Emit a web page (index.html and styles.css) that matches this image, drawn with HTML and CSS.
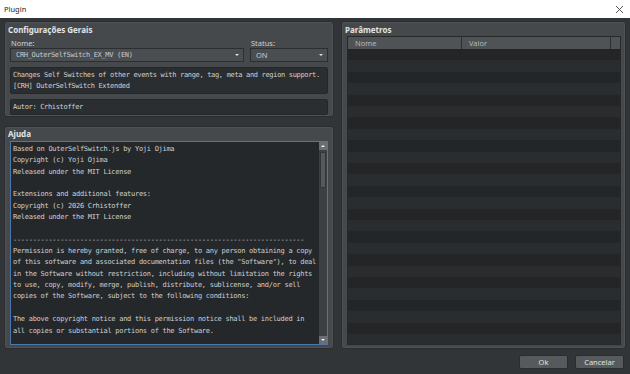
FILE: index.html
```html
<!DOCTYPE html>
<html lang="pt">
<head>
    <meta charset="UTF-8">
    <title>Plugin</title>
    <link rel="stylesheet" href="styles.css">
</head>
<body>
    <div class="titlebar">
        <span class="title">Plugin</span>
        <svg class="close" width="9" height="9" viewBox="0 0 9 9">
            <path d="M1 1 L8 8 M8 1 L1 8" stroke="#444" stroke-width="0.9" fill="none"/>
        </svg>
    </div>

    <div class="main">
        <div class="left">
            <section class="panel general">
                <div class="panel-title">Configurações Gerais</div>
                <div class="fields">
                    <div class="field name">
                        <div class="label">Nome:</div>
                        <div class="select mono">CRH_OuterSelfSwitch_EX_MV (EN)<span class="arrow"></span></div>
                    </div>
                    <div class="field status">
                        <div class="label">Status:</div>
                        <div class="select">ON<span class="arrow"></span></div>
                    </div>
                </div>
                <div class="box desc mono">Changes Self Switches of other events with range, tag, meta and region support.<br>[CRH] OuterSelfSwitch Extended</div>
                <div class="box author mono">Autor: Crhistoffer</div>
            </section>

            <section class="panel help">
                <div class="panel-title">Ajuda</div>
                <div class="textarea">
<pre class="help-text">Based on OuterSelfSwitch.js by Yoji Ojima
Copyright (c) Yoji Ojima
Released under the MIT License

Extensions and additional features:
Copyright (c) 2026 Crhistoffer
Released under the MIT License

--------------------------------------------------------------------------
Permission is hereby granted, free of charge, to any person obtaining a copy
of this software and associated documentation files (the "Software"), to deal
in the Software without restriction, including without limitation the rights
to use, copy, modify, merge, publish, distribute, sublicense, and/or sell
copies of the Software, subject to the following conditions:

The above copyright notice and this permission notice shall be included in
all copies or substantial portions of the Software.</pre>
                    <div class="scrollbar">
                        <div class="sb-btn up"></div>
                        <div class="sb-track"><div class="sb-thumb"></div></div>
                        <div class="sb-btn down"></div>
                    </div>
                </div>
            </section>
        </div>

        <section class="panel params">
            <div class="panel-title">Parâmetros</div>
            <div class="table">
                <div class="thead">
                    <div class="th col-name">Nome</div>
                    <div class="th col-value">Valor</div>
                    <div class="th col-corner"></div>
                </div>
                <div class="tbody"></div>
            </div>
        </section>
    </div>

    <div class="footer">
        <button class="btn">Ok</button>
        <button class="btn">Cancelar</button>
    </div>
</body>
</html>
```

FILE: styles.css
```css
body {
    margin: 0;
    width: 630px;
    height: 374px;
    overflow: hidden;
    background-color: #323538;
    font-family: 'Noto Sans', 'DejaVu Sans', sans-serif;
    color: #d6d8da;
}

.titlebar {
    height: 18px;
    background-color: #ffffff;
    display: flex;
    align-items: center;
    justify-content: space-between;
    padding: 0 6px 0 4px;
}

.title {
    font-size: 7.5px;
    color: #222;
}

.main {
    display: grid;
    grid-template-columns: 330px 285px;
    column-gap: 7px;
    padding: 3px 4px 0 4px;
    height: 328px;
}

.left {
    display: flex;
    flex-direction: column;
    gap: 9px;
}

.panel {
    background-color: #46494c;
    border: 1px solid #2a2c2f;
    border-radius: 3px;
    box-sizing: border-box;
    padding: 2px 5px 0 5px;
    box-shadow: inset 0 0 0 1px #505356;
}

.panel-title {
    font-weight: bold;
    font-size: 8px;
    line-height: 11px;
    margin-left: -2px;
    color: #e2e4e6;
}

.mono {
    font-family: 'DejaVu Sans Mono', 'Liberation Mono', monospace;
    font-size: 7px;
    letter-spacing: -0.33px;
}

.general {
    height: 96px;
}

.fields {
    display: flex;
    gap: 6px;
    margin-top: 3px;
}

.field.name {
    width: 234px;
}

.field.status {
    width: 78px;
}

.label {
    font-size: 7.5px;
    line-height: 10px;
    padding-left: 1px;
    color: #cfd1d3;
}

.select {
    position: relative;
    height: 14px;
    box-sizing: border-box;
    background-color: #4b4e51;
    border: 1px solid #2c2e31;
    padding-left: 5px;
    line-height: 12px;
    font-size: 7.5px;
    color: #c9cbcd;
}

.select.mono {
    font-size: 7px;
}

.arrow {
    position: absolute;
    right: 4px;
    top: 5px;
    border-left: 2px solid transparent;
    border-right: 2px solid transparent;
    border-top: 2px solid #e0e0e0;
}

.box {
    background-color: #2b2e31;
    border: 1px solid #25272a;
    border-radius: 2px;
    box-sizing: border-box;
    color: #cfd1d3;
    padding: 0 2px;
}

.desc {
    margin-top: 5px;
    height: 27px;
    line-height: 11px;
    padding-top: 2px;
}

.author {
    margin-top: 5px;
    height: 16px;
    line-height: 14px;
}

.help {
    height: 223px;
    padding-top: 0;
}

.help .panel-title {
    margin-top: 1px;
}

.textarea {
    margin-top: 2px;
    height: 204px;
    display: flex;
    background-color: #25282b;
    border: 1px solid #4b78a8;
    box-sizing: border-box;
}

.help-text {
    flex: 1;
    margin: 0;
    padding: 2px 2px 0 2px;
    font-family: 'DejaVu Sans Mono', 'Liberation Mono', monospace;
    font-size: 7px;
    letter-spacing: -0.28px;
    line-height: 11.35px;
    color: #cdd0d2;
    overflow: hidden;
}

.scrollbar {
    width: 8px;
    display: flex;
    flex-direction: column;
    background-color: #3d4043;
}

.sb-btn {
    height: 8px;
    background-color: #6a6e71;
    display: grid;
    place-items: center;
}

.sb-btn::after {
    content: "";
    border-left: 2px solid transparent;
    border-right: 2px solid transparent;
}

.sb-btn.up::after {
    border-bottom: 2px solid #f0f0f0;
}

.sb-btn.down::after {
    border-top: 2px solid #f0f0f0;
}

.sb-track {
    flex: 1;
    padding: 2px 1px;
}

.sb-thumb {
    height: 36px;
    background-color: #55595c;
    border: 1px solid #333537;
    box-sizing: border-box;
}

.params {
    height: 328px;
}

.table {
    margin-top: 1px;
    width: 274px;
    height: 309px;
    border: 1px solid #26282a;
    box-sizing: border-box;
    display: flex;
    flex-direction: column;
}

.thead {
    display: flex;
    height: 12px;
    background-color: #4f5356;
}

.th {
    font-size: 7.5px;
    line-height: 12px;
    color: #b3b7ba;
    padding-left: 7px;
    border-right: 1px solid #2c2e31;
}

.col-name {
    width: 106px;
}

.col-value {
    width: 141px;
}

.col-corner {
    flex: 1;
    border-right: none;
    padding: 0;
}

.tbody {
    flex: 1;
    background: repeating-linear-gradient(#232527 0, #232527 11.4px, #2a2d2f 11.4px, #2a2d2f 22.8px);
}

.footer {
    display: flex;
    justify-content: flex-end;
    gap: 7px;
    padding: 6px 6px 0 0;
}

.btn {
    width: 49px;
    height: 14px;
    padding: 0;
    background-color: #565a5d;
    border: 1px solid #2b2d30;
    border-radius: 2px;
    color: #dfe1e3;
    font-family: 'Noto Sans', 'DejaVu Sans', sans-serif;
    font-size: 7.5px;
}
```
